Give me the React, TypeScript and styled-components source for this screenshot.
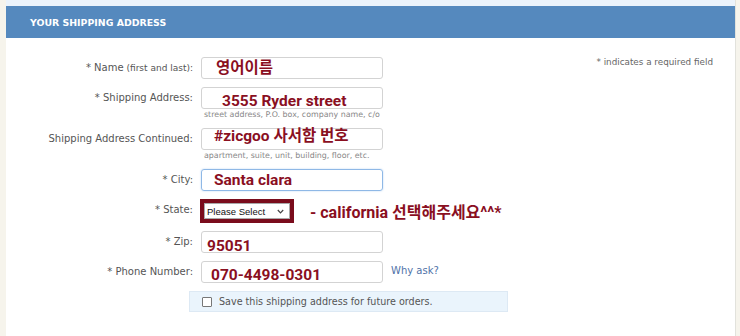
import styled, { createGlobalStyle } from 'styled-components';

const GlobalStyle = createGlobalStyle`
  html, body {
    margin: 0;
    padding: 0;
    background: #f6f4ec;
  }
  body {
    font-family: 'DejaVu Sans', Verdana, sans-serif;
  }
`;

interface IField {
  label: string;
  small?: string;
  value: string;
  indent: number;
  drop: number;
  hint?: string;
  focused?: boolean;
  extra?: string;
}

const fields: IField[] = [
  { label: '* Name', small: '(first and last):', value: '영어이름', indent: 14, drop: 3 },
  { label: '* Shipping Address:', value: '3555 Ryder street', indent: 20, drop: 6, hint: 'street address, P.O. box, company name, c/o' },
  { label: 'Shipping Address Continued:', value: '#zicgoo 사서함 번호', indent: 12, drop: 0, hint: 'apartment, suite, unit, building, floor, etc.' },
  { label: '* City:', value: 'Santa clara', indent: 12, drop: 3, focused: true },
];

const lower: IField[] = [
  { label: '* Zip:', value: '95051', indent: 5, drop: 7 },
  { label: '* Phone Number:', value: '070-4498-0301', indent: 9, drop: 6, extra: 'Why ask?' },
];

export default function App() {
  const renderRow = (f: IField) => (
    <Row key={f.label}>
      <Label>
        {f.label}
        {f.small && <Small> {f.small}</Small>}
      </Label>
      <FieldCol>
        <InputLine>
          <TextBox $focused={f.focused} $indent={f.indent} $drop={f.drop}>
            {f.value}
          </TextBox>
          {f.extra && <WhyAsk>{f.extra}</WhyAsk>}
        </InputLine>
        {f.hint && <Hint>{f.hint}</Hint>}
      </FieldCol>
    </Row>
  );

  return (
    <Page>
      <GlobalStyle />
      <Panel>
        <TopStrip />
        <Header>YOUR SHIPPING ADDRESS</Header>
        <Body>
          <Form>
            {fields.map(renderRow)}
            <Row>
              <Label>* State:</Label>
              <FieldCol>
                <InputLine>
                  <SelectFrame>
                    <FakeSelect>
                      Please Select
                      <svg width="7" height="5" viewBox="0 0 7 5">
                        <path d="M0.8 1 L3.5 3.8 L6.2 1" fill="none" stroke="#444" strokeWidth="1.2" />
                      </svg>
                    </FakeSelect>
                  </SelectFrame>
                  <Note>- california 선택해주세요^^*</Note>
                </InputLine>
              </FieldCol>
            </Row>
            {lower.map(renderRow)}
            <SaveBar>
              <Check />
              Save this shipping address for future orders.
            </SaveBar>
          </Form>
          <Required>* indicates a required field</Required>
        </Body>
      </Panel>
    </Page>
  );
}

const Page = styled.div`
  padding-left: 6px;
  width: 730px;
  height: 336px;
  overflow: hidden;
`;

const Panel = styled.div`
  background: #fff;
  height: 336px;
  border-right: 1px solid #e2e2dc;
`;

const TopStrip = styled.div`
  height: 6px;
  background: #ebf3fb;
`;

const Header = styled.div`
  height: 32px;
  display: flex;
  align-items: center;
  padding-left: 24px;
  background: #5589be;
  color: #fff;
  font-size: 9.4px;
  font-weight: 700;
`;

const Body = styled.div`
  display: flex;
  justify-content: space-between;
  padding: 19px 22px 0 0;
`;

const Form = styled.div`
  display: flex;
  flex-direction: column;
  gap: 8px;
`;

const Row = styled.div`
  display: flex;
  align-items: flex-start;
`;

const Label = styled.div`
  width: 195px;
  padding-right: 8px;
  box-sizing: border-box;
  text-align: right;
  font-size: 10px;
  color: #555;
  line-height: 22px;
  white-space: nowrap;
`;

const Small = styled.span`
  font-size: 9px;
`;

const FieldCol = styled.div`
  display: flex;
  flex-direction: column;
`;

const InputLine = styled.div`
  display: flex;
  align-items: center;
`;

const TextBox = styled.div<{ $focused?: boolean; $indent: number; $drop: number }>`
  width: 182px;
  height: 22px;
  box-sizing: border-box;
  border: 1px solid ${(p) => (p.$focused ? '#8fb8e6' : '#d3d3d3')};
  border-radius: 3px;
  padding: ${(p) => p.$drop}px 0 0 ${(p) => p.$indent}px;
  font-family: Roboto, 'Noto Sans CJK KR', sans-serif;
  font-weight: 700;
  font-size: 15.5px;
  line-height: 14px;
  color: #8a0f1f;
  white-space: nowrap;
  overflow: visible;
  box-shadow: ${(p) => (p.$focused ? '0 0 2px #b7d4f2' : 'none')};
`;

const WhyAsk = styled.span`
  margin-left: 8px;
  font-size: 10px;
  color: #4f72a8;
  align-self: flex-start;
  margin-top: 4px;
`;

const Hint = styled.div`
  font-size: 7.9px;
  color: #888;
  padding-left: 3px;
  height: 11px;
  line-height: 11px;
`;

const SelectFrame = styled.div`
  width: 94px;
  height: 24px;
  box-sizing: border-box;
  border: 4px solid #7a0c1c;
  margin-left: -1px;
`;

const FakeSelect = styled.div`
  height: 100%;
  box-sizing: border-box;
  border: 1px solid #a9a9a9;
  display: flex;
  align-items: center;
  justify-content: space-between;
  padding: 0 5px 0 2px;
  font-family: 'Liberation Sans', Arial, sans-serif;
  font-size: 9.5px;
  color: #111;
`;

const Note = styled.span`
  margin-left: 16px;
  font-family: Roboto, 'Noto Sans CJK KR', sans-serif;
  font-weight: 700;
  font-size: 16px;
  color: #8a0f1f;
`;

const SaveBar = styled.div`
  margin-left: 183px;
  width: 319px;
  height: 21px;
  box-sizing: border-box;
  background: #eaf4fc;
  border: 1px solid #dde9f4;
  display: flex;
  align-items: center;
  padding-left: 12px;
  font-size: 9.6px;
  color: #555;
`;

const Check = styled.span`
  width: 10px;
  height: 10px;
  box-sizing: border-box;
  border: 1px solid #777;
  border-radius: 1px;
  background: #fff;
  margin-right: 7px;
`;

const Required = styled.div`
  font-size: 8.8px;
  color: #666;
  white-space: nowrap;
`;
